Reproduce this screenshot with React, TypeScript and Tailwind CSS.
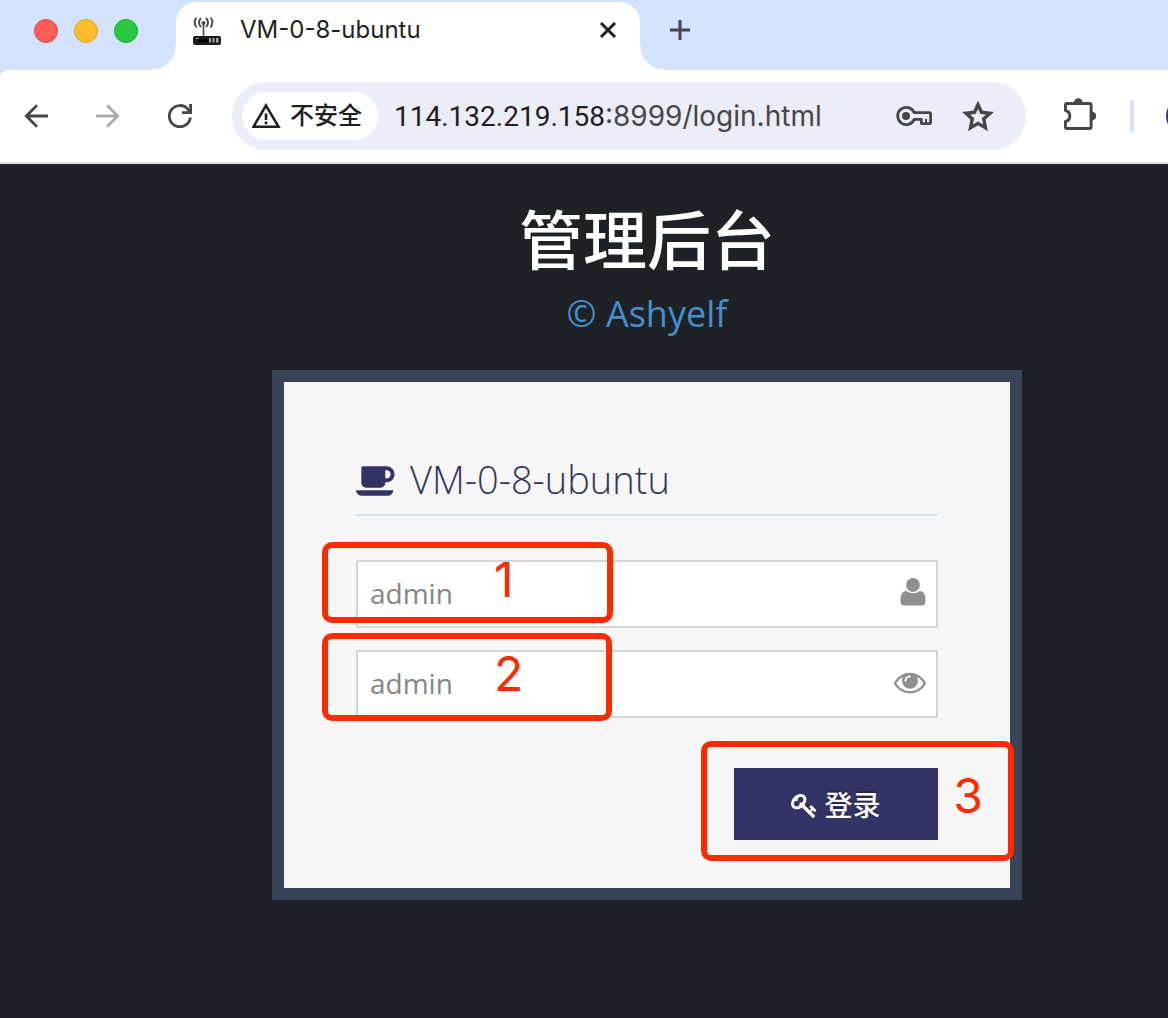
import React, { useState } from "react";

type IconProps = { className?: string };

function RouterFavicon({ className }: IconProps) {
  return (
    <svg viewBox="0 0 30 32" className={className} aria-hidden="true">
      <g fill="none" stroke="#4a4a4a" strokeWidth="1.900">
        <path d="M4.500 1.500Q0.800 6 4.500 11.500M9 2Q5 6.500 9 11M18.500 1.500Q22.200 6 18.500 11.500M14 2Q18 6.500 14 11" />
      </g>
      <path d="M9.700 6q1.800-2 3.600 0v2l-1 1V20h-1.600V9l-1-1z" fill="#444" />
      <rect x="1" y="20" width="28" height="9" rx="2" fill="#1a1a1a" />
      <path d="M4 22.500h2.500" stroke="#aaa" strokeWidth="1" />
      <path d="M17 22h2v4.500h-2zM20.500 22h2v4.500h-2zM24 22h2.500v4.500H24z" fill="#a5a5a5" />
      <rect x="6" y="23.500" width="9.500" height="3" fill="#000" />
    </svg>
  );
}

function CloseIcon({ className }: IconProps) {
  return (
    <svg viewBox="0 0 20 20" className={className} fill="none" stroke="#1f1f1f" strokeWidth="3" aria-hidden="true">
      <path d="M3 3l14 14M17 3L3 17" />
    </svg>
  );
}

function PlusIcon({ className }: IconProps) {
  return (
    <svg viewBox="0 0 20 20" className={className} fill="none" stroke="#474747" strokeWidth="3" aria-hidden="true">
      <path d="M10 0v20M0 10h20" />
    </svg>
  );
}

function ArrowIcon({ className }: IconProps) {
  return (
    <svg viewBox="0 0 24 24" className={className} fill="none" stroke="currentColor" strokeWidth="2.800" aria-hidden="true">
      <path d="M24 12H2.500M13 1.300L2.300 12L13 22.700" />
    </svg>
  );
}

function ReloadIcon({ className }: IconProps) {
  return (
    <svg viewBox="0 0 24 24" className={className} fill="none" stroke="#474747" strokeWidth="2.800" aria-hidden="true">
      <path d="M22.400 13.500A10.600 10.600 0 1 1 20 5.300L22.300 8.300" />
      <path d="M22.600 0V8.700H14" />
    </svg>
  );
}

function WarningIcon({ className }: IconProps) {
  return (
    <svg viewBox="0 0 30 26" className={className} fill="none" stroke="#1f1f1f" strokeWidth="2.600" aria-hidden="true">
      <path d="M14 2.600L26.500 23.700H1.500z" />
      <path d="M14 10.500v6.500M14 18.500v2.700" />
    </svg>
  );
}

function PasswordKeyIcon({ className }: IconProps) {
  return (
    <svg viewBox="0 0 36 22" className={className} fill="none" stroke="#474747" strokeWidth="2.800" aria-hidden="true">
      <path d="M18.200 7.600A8.600 8.600 0 1 0 18.200 14.400H25.400V18.600H33.500Q34.600 18.600 34.600 17.500V8.700Q34.600 7.600 33.500 7.600z" strokeLinejoin="round" />
      <circle cx="10" cy="11" r="4" fill="#474747" stroke="none" />
      <path d="M30 14v4.500" strokeWidth="2" />
    </svg>
  );
}

function StarIcon({ className }: IconProps) {
  return (
    <svg viewBox="0 0 32 31" className={className} aria-hidden="true">
      <path
        d="M16 3.600L19.500 11.300L28 12.200L21.700 17.900L23.500 26.900L16 22.400L8.500 26.900L10.300 17.900L4 12.200L12.500 11.300z"
        fill="none"
        stroke="#474747"
        strokeWidth="3.400"
      />
    </svg>
  );
}

function ExtensionIcon({ className }: IconProps) {
  return (
    <svg viewBox="0 0 32 32" className={className} aria-hidden="true">
      <path
        d="M1.400 12.500V7Q1.400 5.400 3 5.400H25.500Q27.100 5.400 27.100 7V29Q27.100 30.600 25.500 30.600H3Q1.400 30.600 1.400 29V23.500Q5.800 22.500 5.800 18T1.400 12.500z"
        fill="none"
        stroke="#474747"
        strokeWidth="3"
        strokeLinejoin="round"
      />
      <path d="M10 4.500a4.300 4.300 0 0 1 8.600 0zM28 13.700a4.300 4.300 0 0 1 0 8.600z" fill="#474747" />
    </svg>
  );
}

function CoffeeIcon({ className }: IconProps) {
  return (
    <svg viewBox="0 0 1920 1792" className={className} fill="currentColor" aria-hidden="true">
      <path d="M1664 576q0-80-56-136t-136-56h-64v384h64q80 0 136-56t56-136zm-1664 768h1792q0 106-75 181t-181 75h-1280q-106 0-181-75t-75-181zm1856-768q0 159-112.500 271.500t-271.500 112.500h-64v32q0 92-66 158t-158 66h-704q-92 0-158-66t-66-158v-736q0-26 19-45t45-19h1152q159 0 271.500 112.500t112.500 271.500z" />
    </svg>
  );
}

function UserIcon({ className }: IconProps) {
  return (
    <svg viewBox="0 0 26 28" className={className} fill="currentColor" aria-hidden="true">
      <circle cx="13" cy="7" r="6.900" />
      <path d="M6.200 13Q13 17.600 19.800 13C24 13 25.600 17.500 25.600 23Q25.600 27.600 21.500 27.600H4.500Q.4 27.600 .4 23C.4 17.500 2 13 6.200 13z" />
    </svg>
  );
}

function EyeIcon({ className }: IconProps) {
  return (
    <svg viewBox="0 0 1792 1792" className={className} fill="currentColor" aria-hidden="true">
      <path d="M1664 960q-152-236-381-353 61 104 61 225 0 185-131.500 316.500t-316.500 131.500-316.500-131.500-131.500-316.500q0-121 61-225-229 117-381 353 133 205 333.500 326.500t434.500 121.500 434.500-121.500 333.500-326.500zm-720-384q0-20-14-34t-34-14q-125 0-214.500 89.500t-89.500 214.500q0 20 14 34t34 14 34-14 14-34q0-86 61-147t147-61q20 0 34-14t14-34zm848 384q0 34-20 69-140 230-376.500 368.500t-499.500 138.500-499.500-139-376.500-368q-20-35-20-69t20-69q140-229 376.500-368t499.500-139 499.500 139 376.500 368q20 35 20 69z" />
    </svg>
  );
}

function KeyIcon({ className }: IconProps) {
  return (
    <svg viewBox="0 0 1792 1792" className={className} fill="currentColor" aria-hidden="true">
      <path d="M832 512q0-80-56-136t-136-56-136 56-56 136q0 42 19 83-41-19-83-19-80 0-136 56t-56 136 56 136 136 56 136-56 56-136q0-42-19-83 41 19 83 19 80 0 136-56t56-136zm851 704q0 17-49 66t-66 49q-9 0-28.500-16t-36.500-33-38.500-40-24.500-26l-96 96 220 220q28 28 28 68 0 42-39 81t-81 39q-40 0-68-28l-671-671q-176 131-365 131-163 0-265.500-102.500t-102.500-265.500q0-160 95-313t248-248 313-95q163 0 265.500 102.500t102.500 265.500q0 189-131 365l355 355 96-96q-3-3-26-24.500t-40-38.500-33-36.500-16-28.500q0-17 49-66t66-49q13 0 23 10 6 6 46 44.500t82 79.500 86.500 86 73 78 28.500 41z" />
    </svg>
  );
}

function TabStrip() {
  return (
    <div className="flex h-[70px] bg-[#d3e2fd]">
      <div className="flex w-44 shrink-0 items-start gap-4 pt-[19px] pl-[34px]">
        <button aria-label="关闭窗口" className="size-6 rounded-full border border-[#e2463f] bg-[#ff5f57]" />
        <button aria-label="最小化" className="size-6 rounded-full border border-[#e1a116] bg-[#febc2e]" />
        <button aria-label="缩放" className="size-6 rounded-full border border-[#14ae29] bg-[#28c840]" />
      </div>
      <div className="relative mt-0.5 flex w-[464px] items-start rounded-t-[20px] bg-white pr-[22px] pl-4">
        <span className="absolute bottom-0 -left-6 size-6 bg-[radial-gradient(circle_at_top_left,transparent_23px,#fff_24px)]" />
        <span className="absolute -right-6 bottom-0 size-6 bg-[radial-gradient(circle_at_top_right,transparent_23px,#fff_24px)]" />
        <RouterFavicon className="mt-3.5 h-8 w-[30px]" />
        <span className="mt-3 ml-[18px] flex-1 text-2xl leading-8 text-[#1f1f1f]">VM-0-8-ubuntu</span>
        <button aria-label="关闭标签页" className="mt-[18px]">
          <CloseIcon className="size-5" />
        </button>
      </div>
      <button aria-label="新标签页" className="mt-5 ml-[30px] self-start">
        <PlusIcon className="size-5" />
      </button>
    </div>
  );
}

function Toolbar() {
  return (
    <div className="bg-[#d3e2fd]">
      <div className="flex items-center overflow-hidden rounded-tl-lg border-b-2 border-[#dfe3df] bg-white py-3 pl-6">
        <button aria-label="返回" className="text-[#474747]">
          <ArrowIcon className="size-6" />
        </button>
        <button aria-label="前进" className="ml-12 text-[#ababab]">
          <ArrowIcon className="size-6 rotate-180" />
        </button>
        <button aria-label="重新加载" className="ml-12">
          <ReloadIcon className="size-6" />
        </button>
        <div className="ml-10 flex h-[68px] flex-1 items-center rounded-full bg-[#ebedf8] pr-8 pl-2.5">
          <button className="flex h-12 items-center gap-2 rounded-full bg-white pr-4 pl-2.5 text-2xl font-medium text-[#1f1f1f]">
            <WarningIcon className="h-[26px] w-[30px]" />
            不安全
          </button>
          <a href="#login" className="ml-4 flex-1 text-[28px] whitespace-nowrap text-[#474747]">
            <span className="font-['Roboto',sans-serif] text-[#1f1f1f]">114.132.219.158</span>:8999/login.html
          </a>
          <button aria-label="管理密码">
            <PasswordKeyIcon className="h-[22px] w-9" />
          </button>
          <button aria-label="收藏" className="ml-[30px]">
            <StarIcon className="h-[31px] w-8" />
          </button>
        </div>
        <button aria-label="扩展程序" className="mb-1 ml-[38px]">
          <ExtensionIcon className="size-8" />
        </button>
        <span className="ml-[34px] h-8 w-1 rounded-full bg-[#d3e2fd]" />
        <div className="flex w-[34px] shrink-0 pl-8">
          <button aria-label="个人资料" className="size-9 shrink-0 rounded-full bg-[#4527a0]" />
        </div>
      </div>
    </div>
  );
}

function Marks() {
  return (
    <div
      className="pointer-events-none absolute inset-0 font-['Inter',sans-serif] text-5xl leading-[48px] text-[#ff2a00]"
      aria-hidden="true"
    >
      <div className="absolute top-[172px] left-[50px] h-[81px] w-[291px] rounded-[10px] border-6 border-[#ff2a00]" />
      <span className="absolute top-[186px] left-[222px]">1</span>
      <div className="absolute top-[263px] left-[50px] h-[88px] w-[290px] rounded-[10px] border-6 border-[#ff2a00]" />
      <span className="absolute top-[280px] left-[222px]">2</span>
      <div className="absolute top-[371px] right-2 h-[120px] w-[313px] rounded-[10px] border-6 border-[#ff2a00]" />
      <span className="absolute top-[402px] right-[39px]">3</span>
    </div>
  );
}

function LoginCard() {
  const [user, setUser] = useState("admin");
  const [password, setPassword] = useState("admin");
  const field =
    "h-[68px] w-full border-2 border-[#d5d5d5] bg-white pr-14 pb-0.5 pl-3 text-[28px] text-[#858585] outline-none";
  return (
    <section className="relative mt-[30px] w-full max-w-[750px]">
      <form
        onSubmit={(e) => e.preventDefault()}
        className="border-12 border-[#394557] bg-[#f7f7f7] px-[72px] pt-[72px] pb-12"
      >
        <h2 className="flex h-[62px] items-start border-b-2 border-[#d5e3ef] text-[38px] leading-[50px] font-light text-[#333366]">
          <CoffeeIcon className="mt-2 mr-3.5 h-[38px] w-10" />
          VM-0-8-ubuntu
        </h2>
        <label className="relative mt-11 block">
          <input aria-label="用户名" value={user} onChange={(e) => setUser(e.target.value)} className={field} />
          <UserIcon className="absolute top-[18px] right-3 h-7 w-[26px] text-[#909090]" />
        </label>
        <label className="relative mt-[22px] block">
          <input aria-label="密码" value={password} onChange={(e) => setPassword(e.target.value)} className={field} />
          <EyeIcon className="absolute top-4 right-3 size-8 text-[#909090]" />
        </label>
        <div className="mt-[50px] flex justify-end">
          <button
            type="submit"
            className="flex h-[72px] w-[204px] items-center justify-center gap-1.5 bg-[#333366] pt-0.5 text-[28px] font-medium text-white text-shadow-[0_-2px_0_rgba(0,0,0,0.25)]"
          >
            <KeyIcon className="size-[27px]" />
            登录
          </button>
        </div>
      </form>
      <Marks />
    </section>
  );
}

export default function App() {
  return (
    <div className="flex min-h-screen flex-col overflow-hidden bg-[#1e2125] font-['Inter','Noto_Sans_CJK_SC',sans-serif]">
      <header>
        <TabStrip />
        <Toolbar />
      </header>
      <main className="flex flex-1 flex-col items-center pt-9 pl-[126px] font-['Open_Sans','Noto_Sans_CJK_SC',sans-serif]">
        <h1 className="text-[64px] leading-[80px] font-medium text-white">管理后台</h1>
        <h4 className="mt-2 text-4xl leading-[52px] text-[#478fca]">© Ashyelf</h4>
        <LoginCard />
      </main>
    </div>
  );
}
